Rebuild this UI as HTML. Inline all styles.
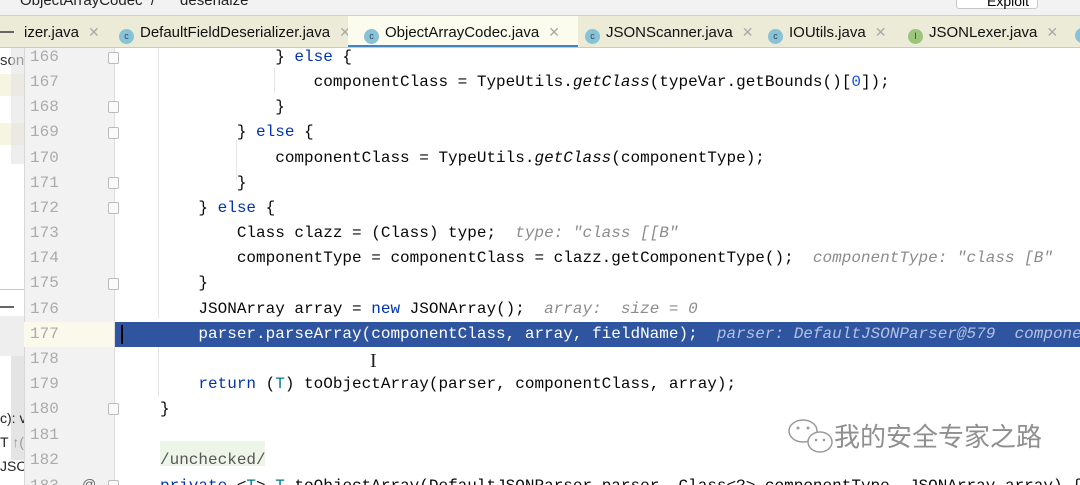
<!DOCTYPE html>
<html><head><meta charset="utf-8"><style>
*{margin:0;padding:0;box-sizing:border-box}
html,body{width:1080px;height:485px;overflow:hidden}
body{background:#fff;position:relative;font-family:"Liberation Sans",sans-serif}
#wrap{position:absolute;left:0;top:0;width:1080px;height:485px;overflow:hidden}
.abs{position:absolute}
.top{left:0;top:0;width:1080px;height:16px;background:#f2f2f2;border-bottom:1px solid #d0d0d0;overflow:hidden}
.tabs{left:0;top:16px;width:1080px;height:32px;background:#ecebd8;border-bottom:1px solid #c9c9c9;overflow:hidden}
.tab{position:absolute;top:0;height:32px;font-size:15px;color:#111;line-height:32px;white-space:nowrap}
.ic{display:inline-block;width:15px;height:15px;border-radius:50%;background:#88c2d6;vertical-align:-2px;margin-right:6px;font-size:9px;line-height:15px;text-align:center;color:#345}
.x{color:#aaa;margin-left:9px;font-size:14px}
.gut{left:24px;top:48px;width:91px;height:437px;background:#f2f2f2;border-left:1px solid #d8d8d8}
.ln{position:absolute;left:30px;font-family:"Liberation Mono",monospace;font-size:16px;color:#ababab;height:25px;line-height:25px}
.code{position:absolute;left:160px;font-family:"Liberation Mono",monospace;font-size:16px;color:#080808;white-space:pre;height:25px;line-height:25px}
.k{color:#0033b3}.h{color:#8c8c8c;font-style:italic}.n{color:#1750eb}.i{font-style:italic}.t{color:#007e8a}
.fold{position:absolute;left:108px;width:11px;height:12px;border:1px solid #bbb;background:#fafafa;border-radius:2px}
</style></head><body><div id="wrap">
<div class="abs top"><span style="position:absolute;left:20px;top:-8px;font-size:15px;color:#222;white-space:nowrap">ObjectArrayCodec &nbsp;/ &nbsp;&nbsp;&nbsp;&nbsp;&nbsp;deserialze</span>
<div style="position:absolute;left:956px;top:-6px;width:82px;height:15px;border:1px solid #c8c8c8;background:#fff;border-radius:3px;font-size:14px;line-height:12px;padding-left:30px">Exploit</div></div>
<div class="abs tabs">
<div style="position:absolute;left:0;top:15px;width:14px;height:2px;background:#666"></div>
<div class="tab" style="left:24px">izer.java<span class="x">✕</span></div>
<div class="tab" style="left:119px"><span class="ic">c</span>DefaultFieldDeserializer.java<span class="x">✕</span></div>
<div class="tab" style="left:348px;width:230px;background:#fbfbee;padding-left:16px;border-bottom:3px solid #4083c9"><span class="ic">c</span>ObjectArrayCodec.java<span class="x">✕</span></div>
<div class="tab" style="left:585px"><span class="ic">c</span>JSONScanner.java<span class="x">✕</span></div>
<div class="tab" style="left:768px"><span class="ic">c</span>IOUtils.java<span class="x">✕</span></div>
<div class="tab" style="left:908px"><span class="ic" style="background:#9bc57a">I</span>JSONLexer.java<span class="x">✕</span></div>
<div class="tab" style="left:1075px"><span class="ic">c</span></div>
</div>
<div class="abs" style="left:0;top:48px;width:24px;height:437px;background:#fff"></div>
<div class="abs" style="left:0;top:52px;font-size:15px;color:#333">son</div>
<div class="abs" style="left:0;top:74px;width:24px;height:22px;background:#f6f5e2"></div>
<div class="abs" style="left:0;top:123px;width:24px;height:22px;background:#f6f5e2"></div>
<div class="abs" style="left:11px;top:48px;width:13px;height:116px;background:#e2e2e2;opacity:.6"></div>
<div class="abs" style="left:0;top:289px;width:24px;height:1px;background:#ccc"></div>
<div class="abs" style="left:0;top:306px;width:14px;height:2px;background:#666"></div>
<div class="abs" style="left:0;top:316px;width:24px;height:40px;background:#eee"></div>
<div class="abs" style="left:11px;top:356px;width:13px;height:104px;background:#e4e4e4"></div>
<div class="abs" style="left:0;top:410px;font-size:14px;color:#222;white-space:nowrap;width:24px;overflow:hidden">c): v</div>
<div class="abs" style="left:0;top:434px;font-size:14px;color:#222;white-space:nowrap;width:24px;overflow:hidden">T <span style="color:#999">↑(</span></div>
<div class="abs" style="left:0;top:458px;font-size:14px;color:#222;width:24px;overflow:hidden">JSC</div>
<div class="abs gut"></div>
<div class="abs" style="left:24px;top:322px;width:91px;height:25px;background:#fbf9ec"></div>
<div class="abs" style="left:114px;top:48px;width:1px;height:437px;background:#ddd"></div>
<div class="abs" style="left:158px;top:48px;width:1px;height:270px;background:#e6e6e6"></div>
<div class="abs" style="left:158px;top:347px;width:1px;height:50px;background:#e6e6e6"></div>
<div class="abs" style="left:236px;top:140px;width:1px;height:40px;background:#e6e6e6"></div>
<div class="abs" style="left:274px;top:68px;width:1px;height:25px;background:#e6e6e6"></div>
<div class="abs" style="left:115px;top:322px;width:965px;height:25px;background:#2f54a0"></div>
<div class="abs" style="left:121px;top:325px;width:2px;height:19px;background:#000"></div>
<div class="abs" style="left:160px;top:441px;width:105px;height:25px;background:#edf5e8"></div>

<div class="ln" style="top:45px">166</div><div class="ln" style="top:70px">167</div><div class="ln" style="top:95px">168</div><div class="ln" style="top:120px">169</div><div class="ln" style="top:146px">170</div><div class="ln" style="top:171px">171</div><div class="ln" style="top:196px">172</div><div class="ln" style="top:221px">173</div><div class="ln" style="top:246px">174</div><div class="ln" style="top:271px">175</div><div class="ln" style="top:297px">176</div><div class="ln" style="top:322px">177</div><div class="ln" style="top:347px">178</div><div class="ln" style="top:372px">179</div><div class="ln" style="top:397px">180</div><div class="ln" style="top:423px">181</div><div class="ln" style="top:448px">182</div><div class="ln" style="top:474px">183</div>
<div class="fold" style="top:52px"></div><div class="fold" style="top:101px"></div><div class="fold" style="top:127px"></div><div class="fold" style="top:177px"></div><div class="fold" style="top:202px"></div><div class="fold" style="top:278px"></div><div class="fold" style="top:403px"></div><div class="fold" style="top:480px"></div>
<div class="abs" style="left:82px;top:476px;font-size:14px;color:#666">@</div>

<div class="code" style="top:45px">            } <span class="k">else</span> {</div>
<div class="code" style="top:70px">                componentClass = TypeUtils.<span class="i">getClass</span>(typeVar.getBounds()[<span class="n">0</span>]);</div>
<div class="code" style="top:95px">            }</div>
<div class="code" style="top:120px">        } <span class="k">else</span> {</div>
<div class="code" style="top:146px">            componentClass = TypeUtils.<span class="i">getClass</span>(componentType);</div>
<div class="code" style="top:171px">        }</div>
<div class="code" style="top:196px">    } <span class="k">else</span> {</div>
<div class="code" style="top:221px">        Class clazz = (Class) type;  <span class="h">type: "class [[B"</span></div>
<div class="code" style="top:246px">        componentType = componentClass = clazz.getComponentType();  <span class="h">componentType: "class [B"</span></div>
<div class="code" style="top:271px">    }</div>
<div class="code" style="top:297px">    JSONArray array = <span class="k">new</span> JSONArray();  <span class="h">array:  size = 0</span></div>
<div class="code" style="top:322px;color:#fff">    parser.parseArray(componentClass, array, fieldName);  <span class="h" style="color:#b4c2e0">parser: DefaultJSONParser@579  compone</span></div>
<div class="code" style="top:372px">    <span class="k">return</span> (<span class="t">T</span>) toObjectArray(parser, componentClass, array);</div>
<div class="code" style="top:397px">}</div>
<div class="code" style="top:448px;color:#555">/unchecked/</div>
<div class="code" style="top:474px"><span class="k">private</span> &lt;<span class="t">T</span>&gt; <span class="t">T</span> toObjectArray(DefaultJSONParser parser, Class&lt;?&gt; componentType, JSONArray array) {</div>
<div class="abs" style="left:370px;top:350px;font-size:20px;color:#222;font-family:'Liberation Serif',serif">I</div>
<svg class="abs" style="left:786px;top:418px" width="62" height="40" viewBox="0 0 62 40"><g fill="none" stroke="#999" stroke-width="1.5"><ellipse cx="17" cy="13" rx="14" ry="11"/><ellipse cx="34" cy="24" rx="12" ry="10" fill="#fff"/></g><g fill="#999"><circle cx="12" cy="10" r="1.5"/><circle cx="22" cy="10" r="1.5"/><circle cx="30" cy="22" r="1.3"/><circle cx="38" cy="22" r="1.3"/></g></svg>
<div class="abs" style="left:834px;top:422px;font-size:26px;color:#8f8f8f;font-family:'Liberation Sans','Noto Sans CJK SC',sans-serif;line-height:30px;white-space:nowrap">我的安全专家之路</div>
</div></body></html>
